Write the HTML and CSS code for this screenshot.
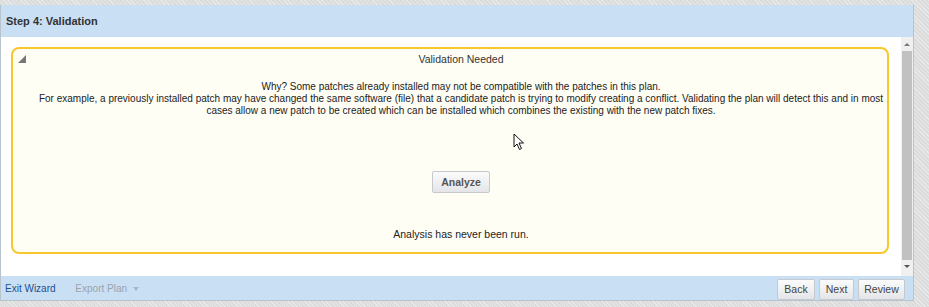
FILE: index.html
```html
<!DOCTYPE html>
<html lang="en">
<head>
    <meta charset="UTF-8">
    <title>Step 4: Validation</title>
    <link rel="stylesheet" href="styles.css">
</head>
<body>
    <div class="wizard">
        <!-- header -->
        <div class="wizard-header">Step 4: Validation</div>

        <!-- body -->
        <div class="wizard-body">
            <div class="content">
                <div class="notice">
                    <span class="corner"></span>
                    <div class="notice-title">Validation Needed</div>
                    <p class="notice-text">
                        Why? Some patches already installed may not be compatible with the patches in this plan.<br>
                        For example, a previously installed patch may have changed the same software (file) that a candidate patch is trying to modify creating a conflict. Validating the plan will detect this and in most cases allow a new patch to be created which can be installed which combines the existing with the new patch fixes.
                    </p>
                    <div class="action">
                        <button class="btn btn-bold">Analyze</button>
                    </div>
                    <div class="status">Analysis has never been run.</div>
                    <svg class="cursor" width="12" height="18" viewBox="0 0 12 18">
                        <path d="M1 1 L1 14 L4 11 L6.5 16.5 L8.5 15.5 L6 10 L10.5 10 Z" fill="#fff" stroke="#111" stroke-width="1"/>
                    </svg>
                </div>
            </div>
            <div class="scrollbar">
                <span class="arrow-up"></span>
                <div class="thumb"></div>
                <span class="arrow-down"></span>
            </div>
        </div>

        <!-- footer -->
        <div class="wizard-footer">
            <div class="footer-left">
                <a href="#" class="link">Exit Wizard</a>
                <span class="link-disabled">Export Plan <span class="caret"></span></span>
            </div>
            <div class="footer-right">
                <button class="btn btn-back">Back</button>
                <button class="btn btn-next">Next</button>
                <button class="btn btn-review">Review</button>
            </div>
        </div>
    </div>
</body>
</html>
```

FILE: styles.css
```css
body {
    margin: 0;
    padding-top: 5px;
    font-family: "Liberation Sans", Arial, sans-serif;
    font-size: 10.5px;
    color: #333;
    background-color: #dcdcdc;
    background-image: repeating-linear-gradient(45deg, rgba(255, 255, 255, 0.35) 0 1px, transparent 1px 3px);
    height: 302px;
}

.wizard {
    width: 912px;
    border: 1px solid #b9c3cc;
    border-bottom: none;
    border-top: none;
    background: white;
}

.wizard-header {
    height: 32px;
    line-height: 32px;
    padding-left: 5px;
    background-color: #c9dff4;
    font-size: 11px;
    font-weight: bold;
    color: #333;
}

.wizard-body {
    display: flex;
    height: 239px;
}

.content {
    flex: 1;
    padding: 10px 12px 0 10px;
}

.notice {
    position: relative;
    height: 203px;
    border: 2px solid #f7c82b;
    border-radius: 8px;
    background-color: #fffef5;
    padding-left: 22px;
    text-align: center;
}

.corner {
    position: absolute;
    left: 5px;
    top: 6px;
    width: 0;
    height: 0;
    border-left: 8px solid transparent;
    border-bottom: 8px solid #777;
}

.notice-title {
    padding-top: 4px;
    line-height: 12px;
    color: #333;
}

.notice-text {
    margin: 16px 0 0;
    font-size: 10px;
    line-height: 12px;
    color: #222;
}

.action {
    margin-top: 54px;
}

.status {
    margin-top: 35px;
    color: #222;
}

.cursor {
    position: absolute;
    left: 500px;
    top: 84px;
}

.btn {
    height: 22px;
    padding: 0 7px;
    font-family: "Liberation Sans", Arial, sans-serif;
    font-size: 10.5px;
    color: #444;
    background: linear-gradient(#fbfbfb, #e3e5e8);
    border: 1px solid #c6c9cd;
    border-radius: 2px;
    cursor: pointer;
}

.btn-bold {
    padding: 0 8px;
    font-weight: bold;
    color: #555;
}

.scrollbar {
    width: 12px;
    background-color: #f0f0f0;
    display: flex;
    flex-direction: column;
    align-items: center;
}

.arrow-up {
    margin-top: 6px;
    width: 0;
    height: 0;
    border-left: 3px solid transparent;
    border-right: 3px solid transparent;
    border-bottom: 3px solid #777;
}

.thumb {
    margin-top: 5px;
    width: 10px;
    height: 209px;
    background-color: #c1c1c1;
}

.arrow-down {
    margin-top: 5px;
    width: 0;
    height: 0;
    border-left: 3px solid transparent;
    border-right: 3px solid transparent;
    border-top: 3px solid #555;
}

.wizard-footer {
    height: 24px;
    display: flex;
    justify-content: space-between;
    align-items: center;
    background-color: #c9dff4;
    border-bottom: 1px solid #b9c3cc;
}

.footer-left {
    padding-left: 4px;
    font-size: 10px;
}

.link {
    color: #24508c;
    text-decoration: none;
    margin-right: 17px;
}

.link-disabled {
    color: #9aa3ad;
}

.caret {
    display: inline-block;
    margin-left: 3px;
    width: 0;
    height: 0;
    border-left: 3px solid transparent;
    border-right: 3px solid transparent;
    border-top: 4px solid #a9b6c4;
    vertical-align: middle;
}

.footer-right {
    display: flex;
    gap: 4px;
    padding-right: 8px;
    padding-top: 2px;
}

.footer-right .btn {
    height: 21px;
    padding: 0;
}

.btn-back {
    width: 38px;
}

.btn-next {
    width: 35px;
}

.btn-review {
    width: 47px;
}
```
